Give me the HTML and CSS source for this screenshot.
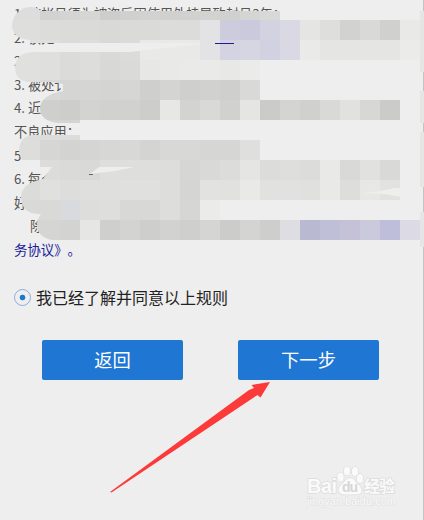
FILE: index.html
```html
<!DOCTYPE html>
<html lang="zh-CN">
<head>
    <meta charset="UTF-8">
    <meta name="viewport" content="width=device-width, initial-scale=1.0">
    <title>服务协议</title>
    <link rel="stylesheet" href="styles.css">
</head>
<body>
    <main>
        <section class="rules">
            <p>1. 该帐号须为被盗后因使用外挂导致封号3年；</p>
            <p>2. 该处</p>
            <p>2</p>
            <p>3. 被处讠</p>
            <p>4. 近</p>
            <p>不良应用；</p>
            <p>5</p>
            <p>6. 每个</p>
            <p>好</p>
            <p class="indent">除</p>
            <p><a class="link">务协议》。</a></p>
        </section>

        <label class="agree">
            <span class="radio"></span>
            <span>我已经了解并同意以上规则</span>
        </label>

        <div class="buttons">
            <button>返回</button>
            <button>下一步</button>
        </div>
    </main>

    <svg class="overlay" width="424" height="520" viewBox="0 0 424 520">
        <defs>
            <clipPath id="strokes">
                <path d="M20 11Q22 7 32 7Q39 8 41 11H424V72H424V240H52Q38 237 37 226Q37 219 41 214H38Q22 213 21 198Q21 183 43 179L52 167H35Q20 165 19 150Q20 136 33 135H80V123H58Q40 121 40 108Q41 95 63 91V84L52 82H28Q15 80 15 67Q16 53 33 52H130L200 44V43H30V40Q13 39 12 26Q13 14 20 11Z"/>
            </clipPath>
        </defs>
        <g id="mosaic" clip-path="url(#strokes)"></g>
        <path class="gap" d="M90 174L99 167H134L115 171Z"/>
        <path class="gap" d="M362 193L380 191L395 188H402V197L384 194Z"/>
        <path class="underline" d="M215 43.5H234"/>
        <path class="dash" d="M89 174.5H93"/>
        <path class="edge" d="M420 11h4v61h-4zM420 91h4v32h-4zM420 132h4v55h-4zM420 212h4v35h-4z"/>
        <path class="arrow" d="M110 492L249 390L254 388L251.500 385L270 382L260.500 397.500L257.500 395L111.500 492.500Z"/>

        <g class="watermark">
            <text class="brand" x="307" y="493" textLength="30">Bai</text>
            <ellipse cx="340.500" cy="477" rx="3.200" ry="4.500"/>
            <ellipse cx="347" cy="471" rx="3.200" ry="4.500"/>
            <ellipse cx="355" cy="471.500" rx="3.200" ry="4.500"/>
            <ellipse cx="360" cy="478.500" rx="3.200" ry="4.500"/>
            <path d="M350 478C346 478 345 482 341 485C336 490 339 495 345 494.500H356C363 495 363 489 359 485C355 482 355 478 350 478Z"/>
            <text class="du" x="342" y="492" textLength="16">du</text>
            <text class="brand-cn" x="364" y="492" textLength="31">经验</text>
            <text class="site" x="307" y="505" textLength="89">jingyan.baidu.com</text>
        </g>
    </svg>
    <script src="script.js"></script>
</body>
</html>
```
FILE: styles.css
```css
body {
    font-family: "Noto Sans", "Noto Sans CJK SC", sans-serif;
    margin: 0;
    padding: 0;
    background-color: #eee;
    color: #555;
}

main {
    box-sizing: border-box;
    height: 520px;
    padding: 2px 44px 0 14px;
    border-right: 1px solid #c4c4c4;
    overflow: hidden;
}

.rules {
    font-family: "Noto Sans CJK SC", sans-serif;
    font-size: 13.2px;
    line-height: 23.6px;
    text-spacing-trim: space-all;
}

.rules p {
    margin: 0;
    white-space: nowrap;
}

.rules .indent {
    padding-left: 16px;
}

.link {
    color: #1a1a9c;
    font-size: 13.4px;
}

.agree {
    display: flex;
    align-items: center;
    gap: 5px;
    height: 24px;
    margin-top: 23px;
    font-family: "Noto Sans CJK SC", sans-serif;
    font-size: 16px;
    color: #222;
}

.radio {
    box-sizing: border-box;
    width: 17px;
    height: 17px;
    margin-top: 2px;
    border: 1.5px solid #85aee0;
    border-radius: 50%;
    background: radial-gradient(circle, #1f74d0 2.5px, transparent 3.2px);
}

.buttons {
    display: flex;
    justify-content: space-between;
    margin-top: 31px;
    padding-left: 28px;
}

.buttons button {
    width: 141px;
    height: 40px;
    padding: 0 0 2px;
    border: 0;
    border-radius: 2px;
    background-color: #1f77d3;
    color: #fff;
    font-family: "Noto Sans CJK SC", sans-serif;
    font-size: 18.3px;
}

.overlay {
    position: absolute;
    top: 0;
    left: 0;
    pointer-events: none;
}

.gap {
    fill: #eeeeec;
}

.underline {
    stroke: #1c1c8c;
}

.dash {
    stroke: #666;
}

.edge {
    fill: #e5e5e3;
}

.arrow {
    fill: #fc3a3a;
}

.watermark {
    fill: #fafafa;
    stroke: #dcdcdc;
    stroke-width: 1.5px;
    paint-order: stroke;
    font-family: "Liberation Sans", "Noto Sans CJK SC", sans-serif;
}

.brand {
    font-size: 20px;
    font-weight: bold;
}

.du {
    fill: #d6d6d6;
    stroke: none;
    font-size: 14px;
    font-weight: bold;
}

.brand-cn {
    font-size: 16px;
    font-weight: bold;
}

.site {
    stroke: #e0e0e0;
    stroke-width: 1px;
    font-size: 11px;
}
```
FILE: script.js
```js
const SIZE = 20;
const mosaic = document.getElementById('mosaic');

// one line per row of blocks: y, first x, colours from left to right
const rows = [
    [0, 0, 'ddd ddd d2d2d0 d4d4d2 d6d6d4 cdcdcb d0d0ce d2d2d0 d0d0ce d1d1cf d2d2d0 d0d0ce d5d5d3 d8d8d6'],
    [20, 0, 'dededc dededc dcdcda dbdbd9 dadad8 d9d9d7 dadad8 dadad8 dcdcda dcdcda e3e3e6 cdccdd cbcadc d3d2e1 dad9e3 e5e5e3 dededc d2d2d0 d9d9d7 d0d0ce e9e9e7'],
    [40, 0, 'e0e0de e0e0de dfdfdd dbdbd9 dddddb d9d9d7 dbdbd9 e9e9e7 e9e9e7 e9e9e7 e3e3e6 d4d3e1 d6d6e3 d2d1e1 dad8e3 eaeae8 e5e5e3 e5e5e3 e5e5e3 e5e5e3 ebebe9'],
    [60, 0, 'e0e0de e0e0de dfdfdd dbdbd9 dddddb d8d8d6 dadad8 e7e7e5 e9e9e7 eaeae8 eaeae8 e8e8e6 ebebe9'],
    [80, 0, 'dededc dededc d8d8d6 d5d5d3 d5d5d3 d4d4d2 d6d6d4 cfcfcd d4d4d2 cfcfcd d1d1cf cfcfcd d9d9d7'],
    [100, 40, 'cfcfcd cdcdcb d3d3d1 d1d1cf d1d1cf cdcdcb e7e7e5 d3d3d1 d9d9d7 d1d1cf e5e5e3 cbcbc9 d4d4d2 d0d0ce d9d9d7 e1e1df d7d7d5 cbcbc9'],
    [140, 0, 'dddddb dddddb d6d6d4 d3d3d1 d5d5d3 d7d7d5 d8d8d6 d4d4d2 d8d8d6 d8d8d6 d6d6d4 d6d6d4 dfdfdd'],
    [160, 40, 'dcdcda dadad8 d9d9d7 dededc dededc dededc dddddb d6d6d4 d9d9d7 dcdcda e5e5e3 dcdcda dededc dcdcda e9e9e7 d9d9d7 e1e1df d9d9d7'],
    [180, 20, 'dbdbd9 e0e0de dddddb dfdfdd dfdfdd e0e0de e0e0de dddddb d5d5d3 e2e2e0 e1e1df e9e9e7 e1e1df e1e1e2 e0e0de e9e9e7 dddddb e7e7e5 e2e2e0'],
    [200, 20, 'd9d9d7 d9d9d7 d9dadd dddddb dededc d8d8d6 d8d8d6 dddddb d6d6d4 ebebe9'],
    [220, 20, 'd6d6d4 d5d5d3 d3d3d1 e6e6e4 cfcfcd d3d3d1 cececc d2d2d0 cfcfcd d5d5d3 ccccca d4d4d2 cececc dedde2 bab9d2 c0bfd8 c5c2d8 cbc9dc bebedb dcdbe5']
];

function addBlock(x, y, width, height, color) {
    const rect = document.createElementNS('http://www.w3.org/2000/svg', 'rect');
    rect.setAttribute('x', x);
    rect.setAttribute('y', y);
    rect.setAttribute('width', width);
    rect.setAttribute('height', height);
    rect.setAttribute('fill', '#' + color);
    mosaic.appendChild(rect);
}

rows.forEach(([y, start, colors]) => {
    colors.split(' ').forEach((color, i) => addBlock(start + i * SIZE, y, SIZE, SIZE, color));
});

// rounded ends that run past the grid
addBlock(40, 120, 40, 3, 'd4d4d2');
addBlock(20, 135, 60, 5, 'dcdcda');
```
